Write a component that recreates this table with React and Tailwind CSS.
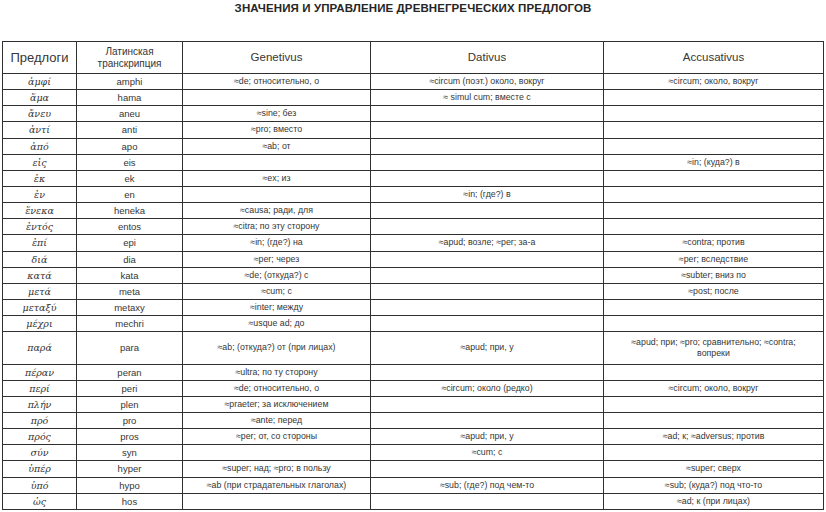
import React from 'react';

const rows = [
  { gr: 'ἀμφί', lat: 'amphi', gen: '≈de; относительно, о', dat: '≈circum (поэт.) около, вокруг', acc: '≈circum; около, вокруг' },
  { gr: 'ἅμα', lat: 'hama', gen: '', dat: '≈ simul cum; вместе с', acc: '' },
  { gr: 'ἄνευ', lat: 'aneu', gen: '≈sine; без', dat: '', acc: '' },
  { gr: 'ἀντί', lat: 'anti', gen: '≈pro; вместо', dat: '', acc: '' },
  { gr: 'ἀπό', lat: 'apo', gen: '≈ab; от', dat: '', acc: '' },
  { gr: 'εἰς', lat: 'eis', gen: '', dat: '', acc: '≈in; (куда?) в' },
  { gr: 'ἐκ', lat: 'ek', gen: '≈ex; из', dat: '', acc: '' },
  { gr: 'ἐν', lat: 'en', gen: '', dat: '≈in; (где?) в', acc: '' },
  { gr: 'ἕνεκα', lat: 'heneka', gen: '≈causa; ради, для', dat: '', acc: '' },
  { gr: 'ἐντός', lat: 'entos', gen: '≈citra; по эту сторону', dat: '', acc: '' },
  { gr: 'ἐπί', lat: 'epi', gen: '≈in; (где?) на', dat: '≈apud; возле; ≈per; за-а', acc: '≈contra; против' },
  { gr: 'διά', lat: 'dia', gen: '≈per; через', dat: '', acc: '≈per; вследствие' },
  { gr: 'κατά', lat: 'kata', gen: '≈de; (откуда?) с', dat: '', acc: '≈subter; вниз по' },
  { gr: 'μετά', lat: 'meta', gen: '≈cum; с', dat: '', acc: '≈post; после' },
  { gr: 'μεταξύ', lat: 'metaxy', gen: '≈inter; между', dat: '', acc: '' },
  { gr: 'μέχρι', lat: 'mechri', gen: '≈usque ad; до', dat: '', acc: '' },
  { gr: 'παρά', lat: 'para', gen: '≈ab; (откуда?) от (при лицах)', dat: '≈apud; при, у', acc: ['≈apud; при; ≈pro; сравнительно; ≈contra;', 'вопреки'], tall: true },
  { gr: 'πέραν', lat: 'peran', gen: '≈ultra; по ту сторону', dat: '', acc: '' },
  { gr: 'περί', lat: 'peri', gen: '≈de; относительно, о', dat: '≈circum; около (редко)', acc: '≈circum; около, вокруг' },
  { gr: 'πλήν', lat: 'plen', gen: '≈praeter; за исключением', dat: '', acc: '' },
  { gr: 'πρό', lat: 'pro', gen: '≈ante; перед', dat: '', acc: '' },
  { gr: 'πρός', lat: 'pros', gen: '≈per; от, со стороны', dat: '≈apud; при, у', acc: '≈ad; к; ≈adversus; против' },
  { gr: 'σύν', lat: 'syn', gen: '', dat: '≈cum; с', acc: '' },
  { gr: 'ὑπέρ', lat: 'hyper', gen: '≈super; над; ≈pro; в пользу', dat: '', acc: '≈super; сверх' },
  { gr: 'ὑπό', lat: 'hypo', gen: '≈ab (при страдательных глаголах)', dat: '≈sub; (где?) под чем-то', acc: '≈sub; (куда?) под что-то' },
  { gr: 'ὡς', lat: 'hos', gen: '', dat: '', acc: '≈ad; к (при лицах)' },
];

const cell = 'border border-[#303030] text-center align-middle px-1 leading-[11px]';

export default function App() {
  return (
    <div className="w-[826px] h-[512px] bg-white overflow-hidden text-[#363636]" style={{ fontFamily: '"Liberation Sans", Arial, sans-serif' }}>
      <div className="h-[41px] pt-[2px] text-center">
        <h1 className="text-[11.5px] font-bold tracking-[0.1px] text-[#262626] leading-[12px]">
          ЗНАЧЕНИЯ И УПРАВЛЕНИЕ ДРЕВНЕГРЕЧЕСКИХ ПРЕДЛОГОВ
        </h1>
      </div>
      <table className="ml-[2px] w-[822px] table-fixed border-collapse">
        <colgroup>
          <col className="w-[74px]" />
          <col className="w-[106px]" />
          <col className="w-[188px]" />
          <col className="w-[233px]" />
          <col />
        </colgroup>
        <thead>
          <tr className="h-[32px]">
            <th className={`${cell} font-normal text-[13px]`}>Предлоги</th>
            <th className={`${cell} font-normal text-[10px] leading-[12px]`}>
              Латинская
              <br />
              транскрипция
            </th>
            <th className={`${cell} font-normal text-[11.5px]`}>Genetivus</th>
            <th className={`${cell} font-normal text-[11.5px]`}>Dativus</th>
            <th className={`${cell} font-normal text-[11.5px]`}>Accusativus</th>
          </tr>
        </thead>
        <tbody className="text-[8.8px]">
          {rows.map((r) => (
            <tr key={r.gr} className={r.tall ? 'h-[32.3px]' : 'h-[16.15px]'}>
              <td className={`${cell} italic text-[9.5px]`} style={{ fontFamily: '"DejaVu Serif", serif' }}>{r.gr}</td>
              <td className={`${cell} text-[9.5px]`}>{r.lat}</td>
              <td className={cell}>{r.gen}</td>
              <td className={cell}>{r.dat}</td>
              <td className={`${cell} ${Array.isArray(r.acc) ? 'px-0 whitespace-nowrap' : ''}`}>
                {Array.isArray(r.acc) ? (
                  <>
                    {r.acc[0]}
                    <br />
                    {r.acc[1]}
                  </>
                ) : (
                  r.acc
                )}
              </td>
            </tr>
          ))}
        </tbody>
      </table>
    </div>
  );
}
